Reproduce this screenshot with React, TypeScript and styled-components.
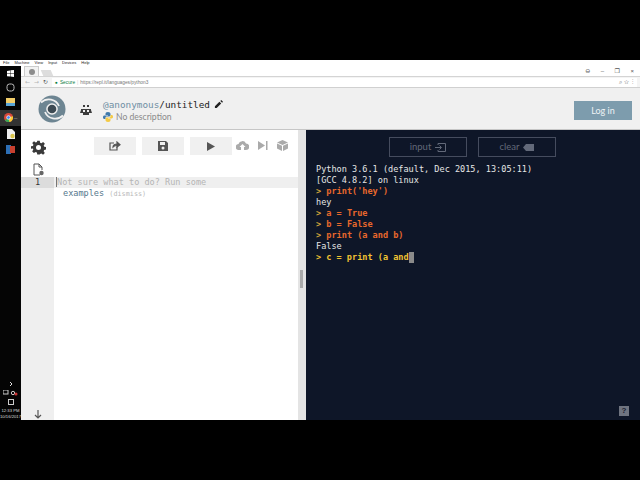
import React from "react";
import styled, { createGlobalStyle } from "styled-components";

const Global = createGlobalStyle`
  html, body { margin: 0; padding: 0; background: #000; overflow: hidden; }
  * { box-sizing: border-box; }
`;
const Page = styled.div`
  width: 640px; height: 480px; background: #000; padding: 60px 0;
  display: flex; flex-direction: column; font-family: "Open Sans", sans-serif;
`;
const MenuBar = styled.div`
  height: 6px; background: #fff; display: flex; gap: 5px; padding-left: 3px;
  font: 4px/6px "Liberation Sans", sans-serif; color: #222;
`;
const Desktop = styled.div`flex: 1; display: flex; min-height: 0;`;
const Taskbar = styled.div`
  width: 21px; background: #050505; display: flex; flex-direction: column; align-items: center;
`;
const TaskSlot = styled.div<{ $active?: boolean; $tall?: boolean }>`
  width: 21px; height: ${p => (p.$tall ? "16px" : "14.5px")}; display: flex; align-items: center; justify-content: center; flex: none;
  background: ${p => (p.$active ? "#333" : "transparent")};
`;
const TaskDash = styled.span`color: #ccc; font-size: 4px; margin-left: 1px;`;
const TaskTray = styled.div`
  margin-top: auto; display: flex; flex-direction: column; align-items: center; gap: 3px;
  color: #ddd; font: 4.2px/6px "Liberation Sans", sans-serif; text-align: center; white-space: nowrap;
`;
const Browser = styled.div`flex: 1; display: flex; flex-direction: column; min-width: 0; background: #fff;`;
const TabStrip = styled.div`
  height: 11px; background: #fff; display: flex; align-items: flex-end; padding-left: 3px;
  border-bottom: 1px solid #d4d4d4;
`;
const Tab = styled.div`
  width: 15px; height: 10px; background: #f2f2f2; border: 1px solid #ccc; border-bottom: 0;
  display: flex; align-items: center; justify-content: center;
`;
const TabIcon = styled.div`width: 6px; height: 6px; border-radius: 50%; background: #8c8c8c;`;
const GhostTab = styled.div`width: 10px; height: 6px; background: #ddd; transform: skewX(24deg); margin-left: 3px;`;
const WindowControls = styled.div`
  margin-left: auto; align-self: center; display: flex; gap: 10.500px; padding-right: 6px; color: #555;
  font: 6px/8px "Liberation Sans", "DejaVu Sans", sans-serif;
`;
const AddressRow = styled.div`
  height: 11px; background: #f4f4f4; display: flex; align-items: center; gap: 3px; padding: 0 3px 0 4px;
  color: #888; border-bottom: 1px solid #d0d0d0;
`;
const NavIcon = styled.span<{ $dark?: boolean }>`
  font: 6px/8px "DejaVu Sans", sans-serif; color: ${p => (p.$dark ? "#555" : "#b5b5b5")}; width: 6px;
`;
const UrlBox = styled.div`
  flex: 1; height: 9px; background: #fff; display: flex; align-items: center; padding: 0 3px; gap: 2px;
  font: 4.800px/9px "Liberation Sans", sans-serif; color: #777;
`;
const Secure = styled.span`color: #0b8043;`;
const UrlSep = styled.span`color: #ccc;`;
const UrlEnd = styled.span`margin-left: auto; color: #666; font-size: 6px;`;
const Header = styled.div`
  height: 42px; background: #f0f0f0; display: flex; align-items: center; padding: 0 8px 0 17px;
  border-bottom: 1px solid #c6c6c6;
`;
const Logo = styled.svg`width: 28px; height: 28px; margin-right: 14px; flex: none;`;
const Bot = styled.svg`width: 12px; height: 12px; margin-right: 10px; flex: none; margin-top: 2px;`;
const Titles = styled.div`display: flex; flex-direction: column; margin-top: 4px; padding-left: 1px;`;
const TitleLine = styled.div`
  display: flex; align-items: center; font: 9.350px/13px "DejaVu Sans Mono", monospace; color: #222;
`;
const PencilIcon = styled.svg`margin-left: 4px;`;
const Anon = styled.span`color: #6f8fa3;`;
const DescLine = styled.div`
  display: flex; align-items: center; gap: 3px; font: 8.600px/12px "Lato", sans-serif; color: #8a8a8a;
`;
const LoginButton = styled.button`
  margin-left: auto; width: 58px; height: 19px; border: 0; background: #7d9cad; color: #eef3f5;
  font: 9px/19px "Lato", sans-serif; padding: 0; margin-top: 3px; margin-right: 0;
`;
const Workspace = styled.div`flex: 1; display: flex; min-height: 0;`;
const EditorPane = styled.div`width: 277px; background: #fff; display: flex; flex-direction: column;`;
const Toolbar = styled.div`
  height: 32px; display: flex; align-items: center; padding-left: 9.500px; flex: none;
`;
const GearWrap = styled.div`width: 63px; display: flex; margin-top: 2px;`;
const ToolButton = styled.div`
  width: 42px; height: 18px; background: #f0f0f0; margin-right: 6px; display: flex; align-items: center; justify-content: center;
`;
const GhostTools = styled.div`display: flex; gap: 9px; align-items: center; margin-left: -1.500px; margin-top: -2px;`;
const FileRow = styled.div`height: 15px; padding-left: 12px; display: flex; flex: none; align-items: center;`;
const CodeArea = styled.div`flex: 1; display: flex; min-height: 0;`;
const Gutter = styled.div`
  width: 33px; background: #efefef; display: flex; flex-direction: column; align-items: stretch;
  font: 8.600px/11px "DejaVu Sans Mono", monospace; color: #333;
`;
const GutterLine = styled.div`height: 11px; background: #dcdcdc; text-align: center;`;
const GutterFoot = styled.div`margin-top: auto; display: flex; justify-content: center; padding-bottom: 1px;`;
const Code = styled.div`flex: 1; font: 8.550px/11px "DejaVu Sans Mono", monospace; color: #b5b5b5;`;
const ActiveLine = styled.div`height: 11px; background: #efefef; padding-left: 2px; white-space: pre;`;
const Cursor = styled.span`border-left: 1px solid #777;`;
const SecondLine = styled.div`padding: 0 0 0 9px; height: 11px; white-space: pre;`;
const Example = styled.span`color: #55788c;`;
const Dismiss = styled.span`font-size: 6.800px; color: #b8b8b8;`;
const Divider = styled.div`
  width: 8px; background: #e4e4e4; display: flex; align-items: center; justify-content: center;
`;
const Handle = styled.div`width: 3px; height: 18px; background: #aaa; margin: 8px 1px 0 0;`;
const Console = styled.div`
  flex: 1; background: #0e1628; display: flex; flex-direction: column; padding-top: 7px; position: relative;
`;
const ConsoleButtons = styled.div`display: flex; gap: 11px; padding-left: 83px;`;
const ConsoleButton = styled.div`
  width: 78px; height: 20px; border: 1px solid #454c5e; color: #626979;
  display: flex; align-items: center; justify-content: center; gap: 4px;
  font: 9.500px/18px "Lato", sans-serif;
`;
const Output = styled.div`
  margin: 7px 0 0 10px; font: 8.550px/11px "DejaVu Sans Mono", monospace; color: #e6e6e6; white-space: pre;
`;
const OutLine = styled.div`height: 11px;`;
const Cmd = styled.div`height: 11px; color: #e8682c; font-weight: 700;`;
const Pending = styled.div`height: 11px; color: #f1c232; font-weight: 700; display: flex;`;
const Caret = styled.span`width: 5px; height: 11px; background: #8a8a8a;`;
const Prompt = styled.span`color: #d8a83a;`;
const Help = styled.div`
  position: absolute; right: 11px; bottom: 4px; width: 10px; height: 10px; background: #6f7480; color: #1a2030;
  font: 700 8px/10px "Liberation Sans", sans-serif; text-align: center;
`;

const Gear = () => (
  <svg width="15" height="15" viewBox="0 0 24 24" fill="#3a3a3a">
    <path fillRule="evenodd" d="M10 1h4l.6 3.200 2 .8L19.400 3.200l2.800 2.800-1.900 2.700.9 2 3 .6v4l-3.200.6-.8 2 1.900 2.700-2.800 2.800-2.700-1.900-2 .8L14 23h-4l-.6-3.200-2-.8-2.800 1.900-2.800-2.800 1.900-2.700-.8-2L0 14v-4l3.100-.6.8-2L2 4.700 4.800 2l2.700 1.900 2-.8zM12 8a4 4 0 1 0 0 8 4 4 0 0 0 0-8z" />
  </svg>
);

export default function App() {
  return (
    <Page>
      <Global />
      <MenuBar>
        <span>File</span><span>Machine</span><span>View</span><span>Input</span><span>Devices</span><span>Help</span>
      </MenuBar>
      <Desktop>
        <Taskbar>
          <TaskSlot>
            <svg width="7" height="7" viewBox="0 0 8 8" fill="#fff"><path d="M0 1l3.500-.5V3.800H0zM4 .4L8 0v3.800H4zM0 4.200h3.500v3.300L0 7zM4 4.200h4V8l-4-.5z" /></svg>
          </TaskSlot>
          <TaskSlot>
            <svg width="9" height="9" viewBox="0 0 9 9" fill="none" stroke="#bbb"><rect x="1" y="1" width="7" height="7" rx="2.500" /></svg>
          </TaskSlot>
          <TaskSlot>
            <svg width="9" height="8" viewBox="0 0 9 8"><rect width="9" height="8" fill="#f3cf6a" /><rect y="5" width="9" height="3" fill="#5aa6d8" /></svg>
          </TaskSlot>
          <TaskSlot $active $tall>
            <svg width="9" height="9" viewBox="0 0 10 10"><circle cx="5" cy="5" r="5" fill="#d9483b" /><path d="M5 5L1 8a5 5 0 0 0 6 1.600z" fill="#3aa757" /><path d="M5 5l4.800-1.400A5 5 0 0 1 6 10z" fill="#fcc934" /><circle cx="5" cy="5" r="2" fill="#4285f4" stroke="#fff" strokeWidth=".8" /></svg>
            <TaskDash>—</TaskDash>
          </TaskSlot>
          <TaskSlot $tall>
            <svg width="8" height="10" viewBox="0 0 8 10"><path d="M0 0h5l3 3v7H0z" fill="#eee" /><circle cx="5.500" cy="7" r="2.200" fill="#d8c34a" /></svg>
          </TaskSlot>
          <TaskSlot $tall>
            <svg width="9" height="9" viewBox="0 0 9 9"><rect width="5" height="9" fill="#2d6fb5" /><rect x="4" y="1" width="5" height="7" fill="#c8402f" /></svg>
          </TaskSlot>
          <TaskTray>
            <svg width="4" height="6" viewBox="0 0 4 6" fill="none" stroke="#ddd"><path d="M1 1l2 2-2 2" /></svg>
            <svg width="15" height="6" viewBox="0 0 15 6"><rect x="0" y="0" width="5" height="4" fill="none" stroke="#ccc" /><circle cx="10" cy="3" r="1.700" fill="none" stroke="#ccc" /><circle cx="13" cy="4" r="1.500" fill="#c33" /></svg>
            <svg width="6" height="6" viewBox="0 0 6 6"><rect x=".5" y=".5" width="5" height="5" fill="none" stroke="#ccc" /></svg>
            <span>12:33 PM<br />10/16/2017</span>
          </TaskTray>
        </Taskbar>
        <Browser>
          <TabStrip>
            <Tab><TabIcon /></Tab>
            <GhostTab />
            <WindowControls><span>⊖</span><span>–</span><span>❐</span><span>×</span></WindowControls>
          </TabStrip>
          <AddressRow>
            <NavIcon>←</NavIcon><NavIcon>→</NavIcon><NavIcon $dark>↻</NavIcon>
            <UrlBox>
              <Secure>●</Secure><Secure>Secure</Secure><UrlSep>|</UrlSep>
              <span>https://repl.it/languages/python3</span>
              <UrlEnd>⌕ ☆ &nbsp;⋮</UrlEnd>
            </UrlBox>
          </AddressRow>
          <Header>
            <Logo viewBox="0 0 28 28">
              <circle cx="14" cy="14" r="13.500" fill="#6d8592" />
              <path d="M20 2.500C26 7 27 15 23 20M8 25.500C2 21 1 13 5 8" fill="none" stroke="#f0f0f0" strokeWidth="0" />
              <path d="M3 7.500C9 2 18 4 21 11M25 20.500C19 26 10 24 7 17" fill="none" stroke="#f0f0f0" strokeWidth="1.800" />
              <circle cx="14" cy="14" r="5.800" fill="#f0f0f0" />
              <circle cx="14" cy="14" r="4.300" fill="#3d4a53" />
            </Logo>
            <Bot viewBox="0 0 12 12" fill="#3c3c3c">
              <rect x="3" y="1" width="2" height="2" /><rect x="7" y="1" width="2" height="2" />
              <path d="M1 5h10v1l1 3H9v2H3V9H0l1-3z" />
              <rect x="3" y="6" width="2" height="2" fill="#f0f0f0" /><rect x="7" y="6" width="2" height="2" fill="#f0f0f0" />
            </Bot>
            <Titles>
              <TitleLine>
                <Anon>@anonymous</Anon>/untitled
                <PencilIcon width="9" height="9" viewBox="0 0 10 10" fill="#222"><path d="M1 7l5-5 2 2-5 5H1zM7 1l1-1 2 2-1 1z" /></PencilIcon>
              </TitleLine>
              <DescLine>
                <svg width="10" height="10" viewBox="0 0 10 10"><path d="M5 0C3 0 2.500.8 2.500 2v1H5v.5H1.500C.5 3.500 0 4 0 5.200s.5 1.800 1.500 1.800H2.500V5.800c0-.8.500-1.300 1.300-1.300h2.500C7 4.500 7.500 4 7.500 3.300V2C7.500.8 6.500 0 5 0z" fill="#3f79ab" /><path d="M5 10c2 0 2.500-.8 2.500-2V7H5v-.5h3.500c1 0 1.500-.5 1.500-1.700S9.500 3 8.500 3H7.500v1.200c0 .8-.5 1.300-1.300 1.300H3.700C3 5.500 2.500 6 2.500 6.700V8C2.500 9.200 3.500 10 5 10z" fill="#f4ca45" /></svg>
                No description
              </DescLine>
            </Titles>
            <LoginButton>Log in</LoginButton>
          </Header>
          <Workspace>
            <EditorPane>
              <Toolbar>
                <GearWrap><Gear /></GearWrap>
                <ToolButton>
                  <svg width="12" height="10" viewBox="0 0 12 10" fill="none" stroke="#555" strokeWidth="1.200"><path d="M8 6v3H1V2h4" /><path d="M4 6c0-2 2-3 4-3V1l3 2.700L8 6V4.500C6 4.500 5 5 4 6z" fill="#555" /></svg>
                </ToolButton>
                <ToolButton>
                  <svg width="10" height="10" viewBox="0 0 10 10" fill="#555"><path fillRule="evenodd" d="M0 0h8l2 2v8H0zM2 1v3h5V1zM5 5.500a1.500 1.500 0 1 0 0 3 1.500 1.500 0 0 0 0-3z" /></svg>
                </ToolButton>
                <ToolButton>
                  <svg width="8" height="9" viewBox="0 0 8 9" fill="#555"><path d="M0 0l8 4.500L0 9z" /></svg>
                </ToolButton>
                <GhostTools>
                  <svg width="13" height="9" viewBox="0 0 13 9" fill="#aaa"><path d="M3 9a3 3 0 0 1-.5-6A4 4 0 0 1 10 2.500 3.200 3.200 0 0 1 10 9h-2V6h1.500L6.500 3 3.500 6H5v3z" /></svg>
                  <svg width="10" height="9" viewBox="0 0 10 9" fill="#aaa"><path d="M0 0l7 4.500L0 9z" /><rect x="8" y="0" width="1.500" height="9" /></svg>
                  <svg width="11" height="11" viewBox="0 0 11 11" fill="#aaa"><path d="M5.500 0L11 2.500 5.500 5 0 2.500zM0 3.500l5 2.200V11L0 8.500zM11 3.500L6 5.700V11l5-2.500z" /></svg>
                </GhostTools>
              </Toolbar>
              <FileRow>
                <svg width="11" height="13" viewBox="0 0 11 13" fill="none" stroke="#555"><path d="M7 12H1V1h5l3 3v3" /><path d="M6 1v3h3" /><circle cx="8.500" cy="10" r="2.200" fill="#666" stroke="none" /></svg>
              </FileRow>
              <CodeArea>
                <Gutter>
                  <GutterLine>1</GutterLine>
                  <GutterFoot>
                    <svg width="8" height="9" viewBox="0 0 8 9" fill="none" stroke="#555" strokeWidth="1.200"><path d="M4 0v8M1 5l3 3 3-3" /></svg>
                  </GutterFoot>
                </Gutter>
                <Code>
                  <ActiveLine><Cursor />Not sure what to do? Run some</ActiveLine>
                  <SecondLine><Example>examples</Example> <Dismiss>(dismiss)</Dismiss></SecondLine>
                </Code>
              </CodeArea>
            </EditorPane>
            <Divider><Handle /></Divider>
            <Console>
              <ConsoleButtons>
                <ConsoleButton>
                  input
                  <svg width="11" height="9" viewBox="0 0 11 9" fill="none" stroke="#626979"><path d="M3 2V.5h7.500v8H3V7M0 4.500h6M4.500 2.500l2 2-2 2" /></svg>
                </ConsoleButton>
                <ConsoleButton>
                  clear
                  <svg width="11" height="7" viewBox="0 0 11 7" fill="#626979"><path d="M3 0h8v7H3L0 3.500z" /></svg>
                </ConsoleButton>
              </ConsoleButtons>
              <Output>
                <OutLine>Python 3.6.1 (default, Dec 2015, 13:05:11)</OutLine>
                <OutLine>[GCC 4.8.2] on linux</OutLine>
                <Cmd><Prompt>&gt;</Prompt> print('hey')</Cmd>
                <OutLine>hey</OutLine>
                <Cmd><Prompt>&gt;</Prompt> a = True</Cmd>
                <Cmd><Prompt>&gt;</Prompt> b = False</Cmd>
                <Cmd><Prompt>&gt;</Prompt> print (a and b)</Cmd>
                <OutLine>False</OutLine>
                <Pending><span>&gt; c = print (a and</span><Caret /></Pending>
              </Output>
              <Help>?</Help>
            </Console>
          </Workspace>
        </Browser>
      </Desktop>
    </Page>
  );
}
